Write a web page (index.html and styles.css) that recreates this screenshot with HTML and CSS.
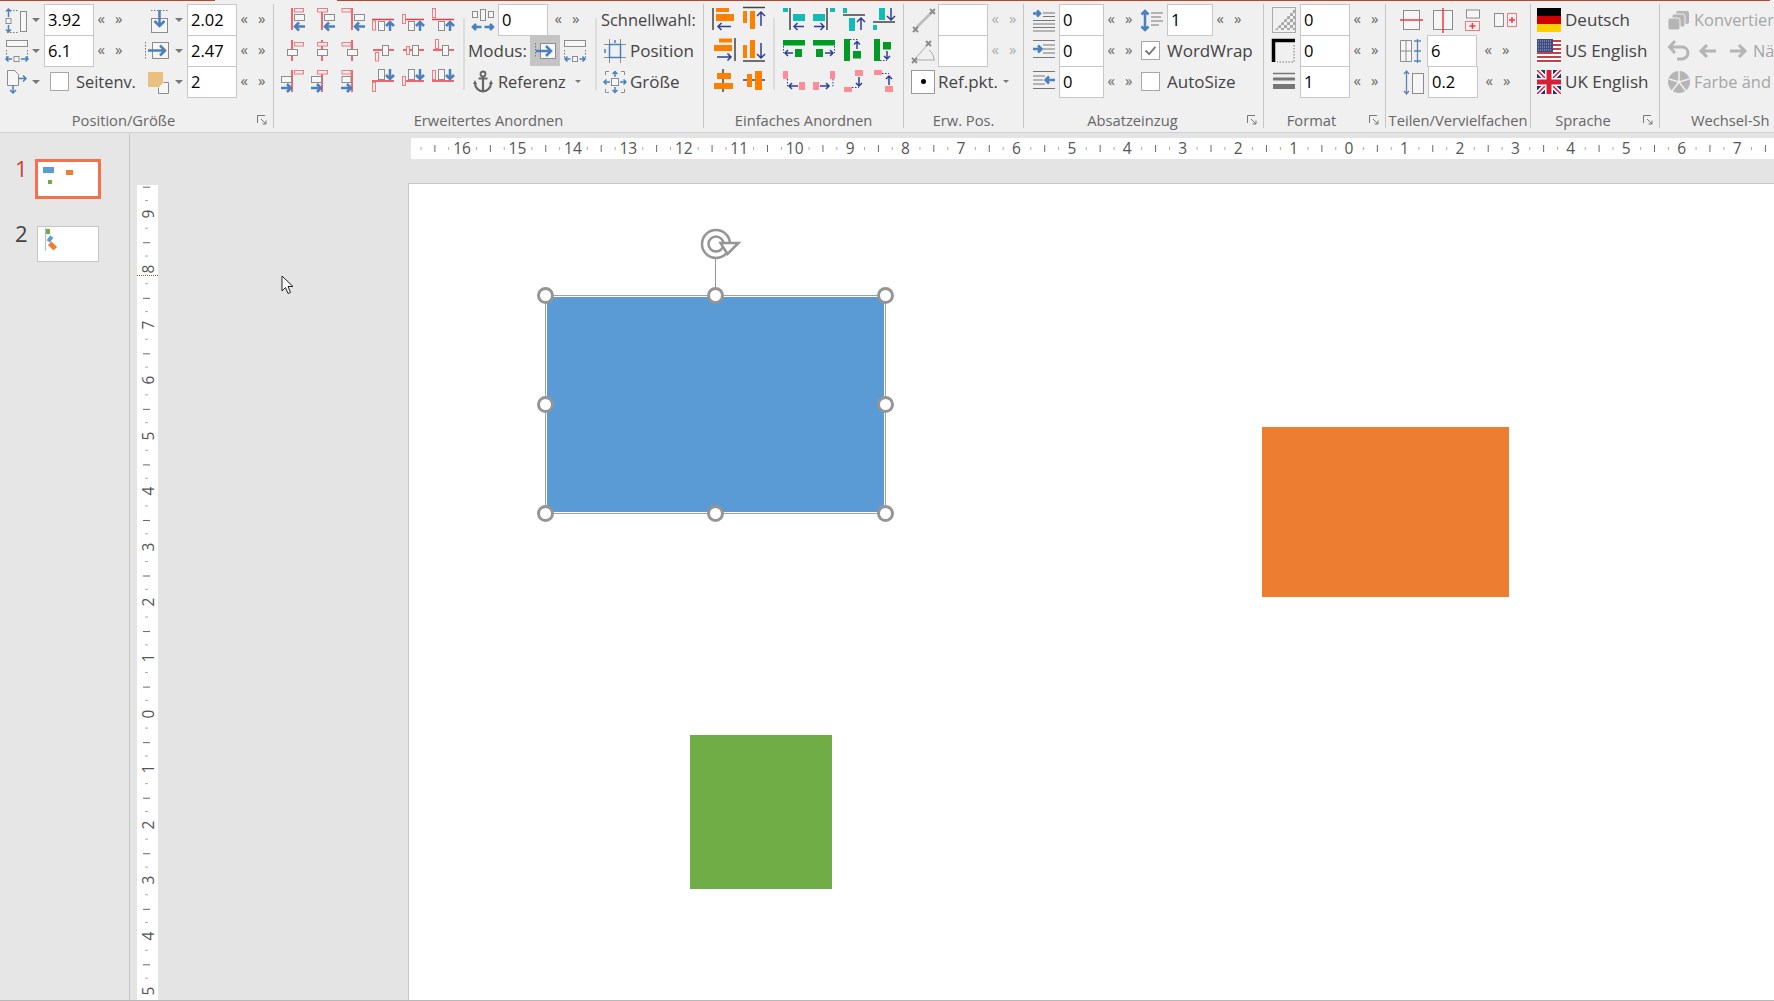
FILE: index.html
```html
<!DOCTYPE html>
<html lang="de">
<head>
    <meta charset="UTF-8">
    <title>Präsentation</title>
    <link rel="stylesheet" href="styles.css">
</head>
<body>
    <div class="ribbon">
        <!-- Position/Größe -->
        <section class="group g-pos">
            <div class="pos-grid">
                <div class="cell">
                    <svg class="ic w22" viewBox="0 0 22 26"><rect class="gray" x="15.500" y="4.500" width="6" height="20"/><path class="dots" d="M2 3.500h11M2 25.500h11"/><rect class="gray" x="1" y="11.500" width="5" height="5"/><path class="blue thin" d="M3.500 10V2m-2.500 2.500 2.500-2.500 2.500 2.500M3.500 18v7m-2.500-2.500 2.500 2.500 2.500-2.500"/></svg>
                    <i class="caret"></i>
                </div>
                <span class="field">3.92</span>
                <span class="spin"><span>«</span><span>»</span></span>
                <div class="cell">
                    <svg class="ic w20" viewBox="0 0 20 26"><path class="dots" d="M1 3.500h17"/><rect class="gray" x="1.500" y="11.500" width="16" height="14"/><path class="blue" d="M9.500 3v16m-5-5 5 5 5-5"/></svg>
                    <i class="caret"></i>
                </div>
                <span class="field">2.02</span>
                <span class="spin"><span>«</span><span>»</span></span>

                <div class="cell">
                    <svg class="ic w22" viewBox="0 0 22 26"><rect class="gray" x="1.500" y="2.500" width="21" height="6"/><path class="dots" d="M1.500 12v9M22.500 12v9"/><rect class="gray" x="9" y="18.500" width="5" height="5"/><path class="blue thin" d="M7 21H1m2.500-2.500L1 21l2.500 2.500M16 21h7m-2.500-2.500L23 21l-2.500 2.500"/></svg>
                    <i class="caret"></i>
                </div>
                <span class="field">6.1</span>
                <span class="spin"><span>«</span><span>»</span></span>
                <div class="cell back6">
                    <svg class="ic w26" viewBox="0 0 26 26"><path class="dots" d="M1.500 4v17"/><rect class="gray" x="8.500" y="4.500" width="16" height="16"/><path class="blue" d="M4 12.500h17m-5-5 5 5-5 5"/></svg>
                    <i class="caret"></i>
                </div>
                <span class="field">2.47</span>
                <span class="spin"><span>«</span><span>»</span></span>

                <div class="cell">
                    <svg class="ic w22" viewBox="0 0 22 26"><path class="gray" d="M2.500 1.500h7l4 4v11h-11z"/><path class="blue thin" d="M14 9.500h7m-3-3 3 3-3 3M8 16v8m-3-3 3 3 3-3"/></svg>
                    <i class="caret"></i>
                </div>
                <div class="cell span2 check-cell">
                    <span class="check"></span>
                    <span class="txt tight">Seitenv.</span>
                </div>
                <div class="cell back2">
                    <svg class="ic w22" viewBox="0 0 22 26"><rect fill="#e8c17f" x="0" y="3" width="15" height="15"/><path class="gray" d="M15.500 13.500h5v11h-10v-6"/></svg>
                    <i class="caret"></i>
                </div>
                <span class="field">2</span>
                <span class="spin"><span>«</span><span>»</span></span>
            </div>
            <div class="group-label">Position/Größe</div>
            <svg class="launcher" viewBox="0 0 10 10"><path d="M.5 8V.5H8M4 4l5 5M9 5.500V9H5.500"/></svg>
        </section>

        <!-- Erweitertes Anordnen -->
        <section class="group g-adv">
            <div class="adv-body">
                <div class="icon-grid six">
                    <svg class="cell-ic" viewBox="0 0 30 31"><path class="red" d="M12 4v22"/><rect class="pink" x="14.500" y="4.500" width="9" height="3.500"/><rect class="gray" x="14.500" y="10.500" width="10" height="6"/><path class="blue" d="M25 22.500H15m4-4-4 4 4 4"/></svg>
                    <svg class="cell-ic" viewBox="0 0 30 31"><path class="red" d="M12 4v22"/><rect class="pink" x="7.500" y="4.500" width="10" height="3.500"/><rect class="gray" x="14.500" y="10.500" width="10" height="6"/><path class="blue" d="M25 22.500H15m4-4-4 4 4 4"/></svg>
                    <svg class="cell-ic" viewBox="0 0 30 31"><path class="red" d="M12 4v22"/><rect class="pink" x="2" y="4.500" width="9" height="3.500"/><rect class="gray" x="14.500" y="10.500" width="10" height="6"/><path class="blue" d="M25 22.500H15m4-4-4 4 4 4"/></svg>
                    <svg class="cell-ic" viewBox="0 0 30 31"><path class="red" d="M2 15.500h22"/><rect class="pink" x="2.500" y="17" width="3" height="9"/><rect class="gray" x="8.500" y="17.500" width="6" height="9"/><path class="blue" d="M20 27V18m-4 4 4-4 4 4"/></svg>
                    <svg class="cell-ic" viewBox="0 0 30 31"><path class="red" d="M2 15.500h22"/><rect class="pink" x="2.500" y="10.500" width="3" height="9"/><rect class="gray" x="8.500" y="17.500" width="6" height="9"/><path class="blue" d="M20 27V18m-4 4 4-4 4 4"/></svg>
                    <svg class="cell-ic" viewBox="0 0 30 31"><path class="red" d="M2 15.500h22"/><rect class="pink" x="2.500" y="4.500" width="3" height="9"/><rect class="gray" x="8.500" y="17.500" width="6" height="9"/><path class="blue" d="M20 27V18m-4 4 4-4 4 4"/></svg>

                    <svg class="cell-ic" viewBox="0 0 30 31"><path class="red" d="M12 5v21"/><rect class="pink" x="14.500" y="7.500" width="9" height="3.500"/><rect class="gray" x="7.500" y="14.500" width="10" height="6"/></svg>
                    <svg class="cell-ic" viewBox="0 0 30 31"><path class="red" d="M12 5v21"/><rect class="pink" x="7.500" y="7.500" width="10" height="3.500"/><rect class="gray" x="7.500" y="14.500" width="10" height="6"/></svg>
                    <svg class="cell-ic" viewBox="0 0 30 31"><path class="red" d="M12 5v21"/><rect class="pink" x="2" y="7.500" width="9" height="3.500"/><rect class="gray" x="7.500" y="14.500" width="10" height="6"/></svg>
                    <svg class="cell-ic" viewBox="0 0 30 31"><path class="red" d="M3 15h21"/><rect class="pink" x="5.500" y="17.500" width="3" height="8.500"/><rect class="gray" x="12.500" y="10.500" width="6" height="10"/></svg>
                    <svg class="cell-ic" viewBox="0 0 30 31"><path class="red" d="M3 15h21"/><rect class="pink" x="6.500" y="11.500" width="3" height="8"/><rect class="gray" x="12.500" y="10.500" width="6" height="10"/></svg>
                    <svg class="cell-ic" viewBox="0 0 30 31"><path class="red" d="M3 15h21"/><rect class="pink" x="5.500" y="4.500" width="3" height="9"/><rect class="gray" x="12.500" y="10.500" width="6" height="10"/></svg>

                    <svg class="cell-ic" viewBox="0 0 30 31"><path class="red" d="M12 4v22"/><rect class="pink" x="14.500" y="4.500" width="9" height="3.500"/><rect class="gray" x="1.500" y="10.500" width="10" height="6"/><path class="blue" d="M1 22h10m-4-4 4 4-4 4"/></svg>
                    <svg class="cell-ic" viewBox="0 0 30 31"><path class="red" d="M12 4v22"/><rect class="pink" x="7.500" y="4.500" width="10" height="3.500"/><rect class="gray" x="1.500" y="10.500" width="10" height="6"/><path class="blue" d="M1 22h10m-4-4 4 4-4 4"/></svg>
                    <svg class="cell-ic" viewBox="0 0 30 31"><path class="red" d="M12 4v22"/><rect class="pink" x="2" y="4.500" width="9" height="3.500"/><rect class="gray" x="2" y="10.500" width="9" height="6"/><path class="blue" d="M1 22h10m-4-4 4 4-4 4"/></svg>
                    <svg class="cell-ic" viewBox="0 0 30 31"><path class="red" d="M2 15h22"/><rect class="pink" x="2.500" y="16.500" width="3" height="9"/><rect class="gray" x="8.500" y="3.500" width="6" height="10"/><path class="blue" d="M20 3v10m-4-4 4 4 4-4"/></svg>
                    <svg class="cell-ic" viewBox="0 0 30 31"><path class="red" d="M2 15h22"/><rect class="pink" x="2.500" y="10.500" width="3" height="9"/><rect class="gray" x="8.500" y="3.500" width="6" height="10"/><path class="blue" d="M20 3v10m-4-4 4 4 4-4"/></svg>
                    <svg class="cell-ic" viewBox="0 0 30 31"><path class="red" d="M2 15h22"/><rect class="pink" x="2.500" y="4.500" width="3" height="9"/><rect class="gray" x="8.500" y="3.500" width="6" height="10"/><path class="blue" d="M20 3v10m-4-4 4 4 4-4"/></svg>
                </div>
                <div class="inner-sep sep-a"></div>
                <div class="mode-col">
                    <div class="row">
                        <svg class="ic w22 ml7" viewBox="0 0 22 26"><rect class="gray" x=".500" y="4.500" width="5" height="6"/><rect class="gray" x="8.500" y="2.500" width="5" height="11"/><rect class="gray" x="16.500" y="4.500" width="5" height="6"/><path class="blue" d="M9.500 20H1m3-3-3 3 3 3M12.500 20H21m-3-3 3 3-3 3"/></svg>
                        <span class="field ml4">0</span>
                        <span class="spin ml3"><span>«</span><span>»</span></span>
                    </div>
                    <div class="row">
                        <span class="txt mode-label">Modus:</span>
                        <span class="mode-btn">
                            <svg class="ic w22" viewBox="0 0 22 26"><path class="dots" d="M1.500 5v15"/><rect class="gray" x="6.500" y="5.500" width="15" height="15"/><path class="blue" d="M2 13h15m-5-5 5 5-5 5"/></svg>
                        </span>
                        <svg class="ic w22 ml4" viewBox="0 0 22 26"><rect class="gray" x=".500" y="2.500" width="21" height="6"/><path class="dots" d="M.500 12v9M21.500 12v9"/><rect class="gray" x="8.500" y="18.500" width="5" height="5"/><path class="blue thin" d="M6.500 21H1m2.500-2.500L1 21l2.500 2.500M15.500 21H21m-2.500-2.500L21 21l-2.500 2.500"/></svg>
                    </div>
                    <div class="row">
                        <svg class="ic w20 ml8" viewBox="0 0 20 24"><path class="anchor" d="M10 7v15M5.500 8.500h9M2 13c0 5 4 8 8 8.500 4-.5 8-3.500 8-8.500"/><circle class="anchor-ring" cx="10" cy="4" r="2.500"/><path fill="#666" d="M0 14l2-4 2 4zM16 14l2-4 2 4z"/></svg>
                        <span class="txt tight ml5">Referenz</span>
                        <i class="caret sm ml9"></i>
                    </div>
                </div>
                <div class="inner-sep sep-b"></div>
                <div class="quick-col">
                    <div class="row"><span class="txt tight">Schnellwahl:</span></div>
                    <div class="row">
                        <svg class="ic w22 ml3" viewBox="0 0 22 26"><path class="gray" d="M0 6.500h22M0 19.500h22M5.500 1v24M16.500 1v24"/><rect fill="#f7f7f7" class="blue thin" x="5.500" y="6.500" width="11" height="13"/><path class="blue thin" d="M1 11v4M11 2v3"/></svg>
                        <span class="txt ml4">Position</span>
                    </div>
                    <div class="row">
                        <svg class="ic w22 ml3" viewBox="0 0 22 26"><path class="gray" d="M5 2.500H1.500V6M17 2.500h3.500V6M5 23.500H1.500V20M17 23.500h3.500V20"/><rect class="gray" x="7.500" y="9.500" width="7" height="7"/><path class="blue thin" d="M11 8V2.500m-2.500 2.500L11 2.500 13.500 5M11 18v5.500m-2.500-2.500 2.500 2.500 2.500-2.500M6 13H0m2.500-2.500L0 13l2.500 2.500M16 13h6m-2.500-2.500L22 13l-2.500 2.500"/></svg>
                        <span class="txt ml4">Größe</span>
                    </div>
                </div>
            </div>
            <div class="group-label">Erweitertes Anordnen</div>
        </section>

        <!-- Einfaches Anordnen -->
        <section class="group g-simple">
            <div class="simple-body">
                <div class="icon-grid two">
                    <svg class="cell-ic" viewBox="0 0 30 31"><path class="dark" d="M3 4v22"/><rect class="org" x="6" y="4" width="13" height="4"/><rect class="org" x="6" y="10" width="18" height="7"/><path class="navy" d="M21 22.500H8m3.500-3.500L8 22.500l3.500 3.500"/></svg>
                    <svg class="cell-ic" viewBox="0 0 30 31"><path class="dark" d="M3 3.500h22"/><rect class="org" x="3" y="7" width="4" height="12"/><rect class="org" x="10" y="7" width="5" height="18"/><path class="navy" d="M21 22V8m-4 4 4-4 4 4"/></svg>
                    <svg class="cell-ic" viewBox="0 0 30 31"><path class="dark" d="M25 3v23"/><rect class="org" x="9" y="3.500" width="13" height="4"/><rect class="org" x="4" y="10" width="18" height="6"/><path class="navy" d="M7 22h14m-3.500-3.500L21 22l-3.500 3.500"/></svg>
                    <svg class="cell-ic" viewBox="0 0 30 31"><path class="dark" d="M3 26h22"/><rect class="org" x="3" y="10" width="4" height="13"/><rect class="org" x="10" y="5" width="5" height="18"/><path class="navy" d="M21 8v15m-4-4 4 4 4-4"/></svg>
                    <svg class="cell-ic" viewBox="0 0 30 31"><path class="dark" d="M13 3v23"/><rect class="org" x="7" y="7" width="14" height="6"/><rect class="org" x="4" y="17" width="19" height="6"/></svg>
                    <svg class="cell-ic" viewBox="0 0 30 31"><path class="dark" d="M3 14h22"/><rect class="org" x="7" y="8" width="5" height="13"/><rect class="org" x="15" y="5" width="7" height="19"/></svg>
                </div>
                <div class="inner-sep sep-c"></div>
                <div class="icon-grid four">
                    <svg class="cell-ic" viewBox="0 0 30 31"><rect class="teal" x="3" y="4" width="5" height="4"/><path class="dark" d="M10 4v22"/><rect class="teal" x="13" y="10" width="12" height="7"/><path class="navy" d="M24 22.500H14m3.500-3.500-3.500 3.500 3.500 3.500"/></svg>
                    <svg class="cell-ic" viewBox="0 0 30 31"><rect class="teal" x="20" y="4" width="5" height="4"/><path class="dark" d="M17 4v22"/><rect class="teal" x="3" y="10" width="12" height="7"/><path class="navy" d="M4 22.500h10m-3.500-3.500 3.500 3.500-3.500 3.500"/></svg>
                    <svg class="cell-ic" viewBox="0 0 30 31"><rect class="teal" x="3" y="4" width="4" height="5"/><path class="dark" d="M3 11h22"/><rect class="teal" x="9" y="14" width="6" height="13"/><path class="navy" d="M21 26V14m-4 4 4-4 4 4"/></svg>
                    <svg class="cell-ic" viewBox="0 0 30 31"><rect class="teal" x="9" y="4" width="6" height="12"/><path class="navy" d="M21 4v12m-4-4 4 4 4-4"/><path class="dark" d="M3 18h22"/><rect class="teal" x="3" y="21" width="4" height="5"/></svg>

                    <svg class="cell-ic" viewBox="0 0 30 31"><rect class="grn" x="3" y="5" width="22" height="5.500"/><rect class="grn" x="15" y="14" width="7" height="8"/><path class="navy-dots" d="M3.500 11v7"/><path class="navy" d="M13 18H5m3-3-3 3 3 3"/></svg>
                    <svg class="cell-ic" viewBox="0 0 30 31"><rect class="grn" x="3" y="5" width="22" height="5.500"/><rect class="grn" x="6" y="14" width="7" height="8"/><path class="navy-dots" d="M24.500 11v7"/><path class="navy" d="M15 18h8m-3-3 3 3-3 3"/></svg>
                    <svg class="cell-ic" viewBox="0 0 30 31"><rect class="grn" x="4" y="4" width="6" height="22"/><rect class="grn" x="13" y="16" width="8" height="7.500"/><path class="navy-dots" d="M10 4.500h8"/><path class="navy" d="M17 14V6.500m-3 3 3-3 3 3"/></svg>
                    <svg class="cell-ic" viewBox="0 0 30 31"><rect class="grn" x="4" y="4" width="6" height="22"/><rect class="grn" x="13" y="7" width="8" height="7.500"/><path class="navy-dots" d="M10 25.500h7"/><path class="navy" d="M17 16v8m-3-3 3 3 3-3"/></svg>

                    <svg class="cell-ic" viewBox="0 0 30 31"><rect class="rose" x="3" y="5" width="5" height="8"/><rect class="rose" x="19" y="16" width="6" height="8"/><path class="navy-dots" d="M7.500 13v7h2"/><path class="navy" d="M18 20H9m3-3-3 3 3 3"/></svg>
                    <svg class="cell-ic" viewBox="0 0 30 31"><rect class="rose" x="3" y="16" width="6" height="8"/><rect class="rose" x="20" y="5" width="5" height="8"/><path class="navy-dots" d="M23 13v7h-2"/><path class="navy" d="M10 20h9m-3-3 3 3-3 3"/></svg>
                    <svg class="cell-ic" viewBox="0 0 30 31"><rect class="rose" x="4" y="21" width="8" height="5"/><rect class="rose" x="15" y="4" width="8" height="6"/><path class="navy-dots" d="M12 21.500h7"/><path class="navy" d="M19 11v9m-3-3 3 3 3-3"/></svg>
                    <svg class="cell-ic" viewBox="0 0 30 31"><rect class="rose" x="4" y="4" width="8" height="5"/><rect class="rose" x="15" y="20" width="8" height="6"/><path class="navy-dots" d="M12 7.500h7"/><path class="navy" d="M19 19v-9m-3 3 3-3 3 3"/></svg>
                </div>
            </div>
            <div class="group-label">Einfaches Anordnen</div>
        </section>

        <!-- Erw. Pos. -->
        <section class="group g-ext">
            <div class="rows">
                <div class="row">
                    <svg class="ic w26 ml7" viewBox="0 0 26 26"><path class="light-line" d="M5 21 21 5"/><path class="cross" d="M2 25l5-5M2 20l5 5M19 7l5-5M19 2l5 5"/></svg>
                    <span class="field ml1">&nbsp;</span>
                    <span class="spin off"><span>«</span><span>»</span></span>
                </div>
                <div class="row">
                    <svg class="ic w26 ml7" viewBox="0 0 26 26"><path class="thin-gray" d="M3 22h21M3 22 18 5M18 12c3 2 5 6 5 10"/><path class="cross" d="M1 25l5-5M1 20l5 5M15 8l5-5M15 3l5 5"/></svg>
                    <span class="field ml1">&nbsp;</span>
                    <span class="spin off"><span>«</span><span>»</span></span>
                </div>
                <div class="row">
                    <span class="ref-box ml7"><i></i></span>
                    <span class="txt ml3">Ref.pkt.</span>
                    <i class="caret sm ml5"></i>
                </div>
            </div>
            <div class="group-label">Erw. Pos.</div>
        </section>

        <!-- Absatzeinzug -->
        <section class="group g-indent">
            <div class="indent-grid">
                <svg class="ic w22" viewBox="0 0 22 26"><path class="dark-thin" d="M10 6h12M10 9.500h12M0 13.500h22M0 17h22M0 20.500h22M0 24h22"/><path class="blue" d="M0 6.500h7m-3-3 3 3-3 3"/></svg>
                <span class="field">0</span>
                <span class="spin"><span>«</span><span>»</span></span>
                <svg class="ic w22" viewBox="0 0 22 26"><path class="dark-thin" d="M10 6h12M10 10h10M10 14h12M10 18h8"/><path class="blue" d="M4 4v19M.500 7.500 4 4l3.500 3.500M.500 19.500 4 23l3.500-3.500"/></svg>
                <span class="field">1</span>
                <span class="spin"><span>«</span><span>»</span></span>

                <svg class="ic w22" viewBox="0 0 22 26"><path class="dark-thin" d="M0 2.500h22M10 7h12M10 11h12M10 15h12M0 19.500h22"/><path class="blue" d="M0 11h8m-3-3.500L8.500 11 5 14.500"/></svg>
                <span class="field">0</span>
                <span class="spin"><span>«</span><span>»</span></span>
                <div class="cell span3 check-cell">
                    <span class="check"><svg viewBox="0 0 19 19"><path d="M4 9.500l4 4 7-8"/></svg></span>
                    <span class="txt ml7">WordWrap</span>
                </div>

                <svg class="ic w22" viewBox="0 0 22 26"><path class="dark-thin" d="M0 2.500h22M0 7h12M0 11h10M0 15h12M0 19.500h22"/><path class="blue" d="M22 11h-9m3-3.500L12.500 11l3.500 3.500"/></svg>
                <span class="field">0</span>
                <span class="spin"><span>«</span><span>»</span></span>
                <div class="cell span3 check-cell">
                    <span class="check"></span>
                    <span class="txt ml7">AutoSize</span>
                </div>
            </div>
            <div class="group-label">Absatzeinzug</div>
            <svg class="launcher" viewBox="0 0 10 10"><path d="M.5 8V.5H8M4 4l5 5M9 5.500V9H5.500"/></svg>
        </section>

        <!-- Format -->
        <section class="group g-format">
            <div class="rows">
                <div class="row">
                    <svg class="ic w24 ml8" viewBox="0 0 24 26"><defs><pattern id="chk" width="6" height="6" patternUnits="userSpaceOnUse"><rect width="3" height="3" fill="#a8a8a8"/><rect x="3" y="3" width="3" height="3" fill="#a8a8a8"/></pattern></defs><rect class="thin-gray" x=".500" y=".500" width="23" height="25"/><path fill="url(#chk)" d="M3 23 23 1v22z"/></svg>
                    <span class="field ml4">0</span>
                    <span class="spin"><span>«</span><span>»</span></span>
                </div>
                <div class="row">
                    <svg class="ic w24 ml8" viewBox="0 0 24 26"><path d="M1.500 24V2.500H23" fill="none" stroke="#000" stroke-width="3.500"/><path class="dots" d="M22 7v17H5"/></svg>
                    <span class="field ml4">0</span>
                    <span class="spin"><span>«</span><span>»</span></span>
                </div>
                <div class="row">
                    <svg class="ic w24 ml8" viewBox="0 0 24 26"><path d="M1 4.500h22" stroke="#777" stroke-width="1.500"/><path d="M1 10h22" stroke="#777" stroke-width="3"/><path d="M1 17.500h22" stroke="#777" stroke-width="5"/></svg>
                    <span class="field ml4">1</span>
                    <span class="spin"><span>«</span><span>»</span></span>
                </div>
            </div>
            <div class="group-label">Format</div>
            <svg class="launcher" viewBox="0 0 10 10"><path d="M.5 8V.5H8M4 4l5 5M9 5.500V9H5.500"/></svg>
        </section>

        <!-- Teilen/Vervielfachen -->
        <section class="group g-split">
            <div class="rows">
                <div class="row split-icons">
                    <svg class="ic w24" viewBox="0 0 24 26"><rect class="gray" x="3.500" y="3.500" width="16" height="19"/><path class="red" d="M0 13h23"/></svg>
                    <svg class="ic w20" viewBox="0 0 20 26"><rect class="gray" x=".500" y="3.500" width="19" height="19"/><path class="red" d="M10 1v25"/></svg>
                    <svg class="ic w16 ml3" viewBox="0 0 16 26"><rect class="gray" x="1.500" y="3" width="13" height="8"/><rect class="pink" x=".500" y="14.500" width="14" height="9"/><path class="red" d="M7.500 16v6M4.500 19h6"/></svg>
                    <svg class="ic w24 ml4" viewBox="0 0 24 26"><rect class="gray" x=".500" y="6.500" width="9" height="13"/><rect class="pink" x="13.500" y="6.500" width="9" height="13"/><path class="red" d="M18 10v6M15 13h6"/></svg>
                </div>
                <div class="row">
                    <svg class="ic w24 ml14" viewBox="0 0 24 26"><path class="gray" d="M.500 2.500h11v21H.500zM.500 13h11M6 2.500v21"/><path class="blue-thin" d="M14 3h7M14 13h7M14 23h7M17.500 1v24"/></svg>
                    <span class="field ml3">6</span>
                    <span class="spin ml4"><span>«</span><span>»</span></span>
                </div>
                <div class="row">
                    <svg class="ic w24 ml18" viewBox="0 0 24 26"><rect class="gray" x="8.500" y="4.500" width="11" height="20"/><path class="blue-thin" d="M2.500 2v23M0 5l2.500-3L5 5M0 22l2.500 3L5 22"/></svg>
                    <span class="field">0.2</span>
                    <span class="spin ml4"><span>«</span><span>»</span></span>
                </div>
            </div>
            <div class="group-label">Teilen/Vervielfachen</div>
        </section>

        <!-- Sprache -->
        <section class="group g-lang">
            <div class="rows">
                <div class="row">
                    <svg class="flag" viewBox="0 0 24 24"><rect width="24" height="8" fill="#000"/><rect y="8" width="24" height="8" fill="#d00000"/><rect y="16" width="24" height="8" fill="#ffce00"/></svg>
                    <span class="txt ml4">Deutsch</span>
                </div>
                <div class="row">
                    <svg class="flag" viewBox="0 0 24 24"><rect width="24" height="24" fill="#fff"/><path d="M0 2h24M0 6h24M0 10h24M0 14h24M0 18h24M0 22h24" stroke="#c0404c" stroke-width="2"/><rect width="16" height="13" fill="#3e4b82"/><path d="M1 2h14M1 5h14M1 8h14M1 11h14" stroke="#a9b0cc" stroke-dasharray="1 1"/></svg>
                    <span class="txt ml4">US English</span>
                </div>
                <div class="row">
                    <svg class="flag" viewBox="0 0 24 24"><rect width="24" height="24" fill="#1f2f78"/><path d="M0 0l24 24M24 0 0 24" stroke="#fff" stroke-width="5"/><path d="M0 0l24 24M24 0 0 24" stroke="#d3213a" stroke-width="1.500"/><path d="M12 0v24M0 12h24" stroke="#fff" stroke-width="8"/><path d="M12 0v24M0 12h24" stroke="#d3213a" stroke-width="5"/></svg>
                    <span class="txt ml4">UK English</span>
                </div>
            </div>
            <div class="group-label">Sprache</div>
            <svg class="launcher" viewBox="0 0 10 10"><path d="M.5 8V.5H8M4 4l5 5M9 5.500V9H5.500"/></svg>
        </section>

        <!-- Wechsel-Shapes, am rechten Rand abgeschnitten -->
        <section class="group g-swap">
            <div class="rows">
                <div class="row">
                    <svg class="ic w22 ml8" viewBox="0 0 22 26"><rect fill="#b5b5b5" x="8" y="4" width="13" height="13" rx="2"/><rect fill="#b5b5b5" stroke="#f0f0f0" x="4" y="7" width="13" height="13" rx="2"/><rect fill="#b5b5b5" stroke="#f0f0f0" x="0" y="11" width="12" height="12" rx="2"/></svg>
                    <span class="txt tight off ml4">Konvertier</span>
                </div>
                <div class="row">
                    <svg class="ic w22 ml8" viewBox="0 0 22 26"><path class="gray-arrow" d="M2 9h12c4 0 6 3 6 6s-3 6-6 6H9M7 3 1.500 9 7 15"/></svg>
                    <svg class="ic w20 ml9" viewBox="0 0 20 26"><path class="gray-arrow" d="M17 13H2m6-6-6 6 6 6"/></svg>
                    <svg class="ic w20 ml9" viewBox="0 0 20 26"><path class="gray-arrow" d="M2 13h15m-6-6 6 6-6 6"/></svg>
                    <span class="txt tight off ml5">Nä</span>
                </div>
                <div class="row">
                    <svg class="ic w22 ml8" viewBox="0 0 22 26"><circle cx="11" cy="13" r="11" fill="#b5b5b5"/><path stroke="#f0f0f0" stroke-width="1.500" d="M11 13V2M11 13l10-3M11 13l7 9M11 13l-7 9M11 13 1 10"/></svg>
                    <span class="txt tight off ml4">Farbe änd</span>
                </div>
            </div>
            <div class="group-label">Wechsel-Sh</div>
        </section>
    </div>

    <div class="main">
        <!-- Folienliste -->
        <aside class="thumbs">
            <div class="thumb-row">
                <span class="num active-num">1</span>
                <div class="thumb active">
                    <i class="mini m1"></i><i class="mini m2"></i><i class="mini m3"></i>
                </div>
            </div>
            <div class="thumb-row">
                <span class="num num-2">2</span>
                <div class="thumb">
                    <i class="mini m4"></i><i class="mini m5"></i><i class="mini m6"></i><i class="mini m7"></i>
                </div>
            </div>
        </aside>

        <div class="workspace">
            <div class="ruler-h">
                <span>16</span><span>15</span><span>14</span><span>13</span><span>12</span><span>11</span><span>10</span><span>9</span><span>8</span><span>7</span><span>6</span><span>5</span><span>4</span><span>3</span><span>2</span><span>1</span><span>0</span><span>1</span><span>2</span><span>3</span><span>4</span><span>5</span><span>6</span><span>7</span>
            </div>
            <div class="ruler-v">
                <span>9</span><span>8</span><span>7</span><span>6</span><span>5</span><span>4</span><span>3</span><span>2</span><span>1</span><span>0</span><span>1</span><span>2</span><span>3</span><span>4</span><span>5</span>
                <i class="cursor-mark"></i>
            </div>
            <div class="slide">
                <div class="shape s-blue">
                    <i class="handle h-tl"></i><i class="handle h-tc"></i><i class="handle h-tr"></i>
                    <i class="handle h-ml"></i><i class="handle h-mr"></i>
                    <i class="handle h-bl"></i><i class="handle h-bc"></i><i class="handle h-br"></i>
                    <i class="rot-line"></i>
                    <svg class="rot-icon" viewBox="0 0 40 34"><circle cx="16" cy="16" r="14" fill="#fff" stroke="#959595" stroke-width="2.500"/><circle cx="16" cy="16" r="7.500" fill="#fff" stroke="#959595" stroke-width="2.500"/><path d="M20.500 15h18l-11 11z" fill="#fff" stroke="#959595" stroke-width="2.500"/></svg>
                </div>
                <div class="shape s-orange"></div>
                <div class="shape s-green"></div>
            </div>
            <svg class="pointer" viewBox="0 0 13 20"><path d="M1 1v15l3.500-3.500 2.500 6 2.500-1-2.500-6H12z" fill="#fff" stroke="#222" stroke-width="1"/></svg>
        </div>
    </div>
    <div class="foot-line"></div>
</body>
</html>
```

FILE: styles.css
```css
* {
    box-sizing: border-box;
}
html, body {
    margin: 0;
    padding: 0;
}
body {
    width: 1774px;
    height: 1001px;
    overflow: hidden;
    font-family: "Open Sans", "Noto Sans", sans-serif;
    background-color: #e4e4e4;
    color: #444;
}

/* ribbon */
.ribbon {
    display: flex;
    height: 133px;
    padding-top: 4px;
    background-color: #f0f0f0;
    border-bottom: 1px solid #d0d0d0;
    position: relative;
    overflow: hidden;
}
.ribbon::before {
    content: "";
    position: absolute;
    left: 0;
    top: 0;
    width: 215px;
    height: 1px;
    background-color: #b7472a;
}
.ribbon::after {
    content: "";
    position: absolute;
    left: 337px;
    top: 0;
    width: 1433px;
    height: 1px;
    background-color: #b7472a;
}
.group {
    position: relative;
    height: 124px;
    flex: none;
    display: flex;
    flex-direction: column;
    border-right: 1px solid #c6c6c6;
}
.g-pos { width: 274px; }
.g-adv { width: 430px; }
.g-simple { width: 200px; }
.g-ext { width: 120px; }
.g-indent { width: 240px; }
.g-format { width: 122px; }
.g-split { width: 145px; }
.g-lang { width: 129px; }
.g-swap { width: 114px; border-right: none; }

.group-label {
    margin-top: auto;
    margin-bottom: -2px;
    height: 20px;
    line-height: 20px;
    font-size: 14.700px;
    color: #666;
    text-align: center;
    white-space: nowrap;
}
.g-pos .group-label { padding-right: 26px; }
.g-indent .group-label { padding-right: 22px; }
.g-format .group-label { padding-right: 26px; }
.g-lang .group-label { padding-right: 24px; }
.g-swap .group-label { text-align: left; padding-left: 31px; }

.launcher {
    position: absolute;
    right: 6px;
    bottom: 3px;
    width: 10px;
    height: 10px;
    fill: none;
    stroke: #777;
    stroke-width: 1;
}

.rows, .pos-grid, .indent-grid {
    height: 93px;
}
.row {
    display: flex;
    align-items: center;
    height: 31px;
    flex: none;
}
.cell {
    display: flex;
    align-items: center;
    height: 31px;
}
.pos-grid {
    display: grid;
    grid-template-columns: 39px 50px 56px 37px 50px 36px;
    grid-auto-rows: 31px;
    padding-left: 5px;
}
.indent-grid {
    display: grid;
    grid-template-columns: 26px 45px 37px 26px 46px 40px;
    grid-auto-rows: 31px;
    padding-left: 9px;
    align-items: center;
}
.span2 { grid-column: span 2; }
.span3 { grid-column: span 3; }
.back6 { margin-left: -6px; }
.back2 { margin-left: -2px; }
.check-cell { padding-left: 6px; }
.g-indent .check-cell { padding-left: 0; }

.field {
    display: block;
    flex: none;
    width: 50px;
    height: 32px;
    line-height: 30px;
    padding-left: 3px;
    background-color: #fff;
    border: 1px solid #c6c6c6;
    font-size: 16.500px;
    color: #000;
    align-self: flex-start;
}
.pos-grid .field, .indent-grid .field {
    align-self: start;
}
.indent-grid .field {
    width: auto;
}
.spin {
    display: flex;
    gap: 10px;
    padding-left: 3.500px;
    font-size: 15px;
    color: #666;
    height: 31px;
    line-height: 29px;
    flex: none;
    width: 36px;
}
.spin.off { color: #adadad; }

.txt {
    font-size: 17px;
    color: #444;
    white-space: nowrap;
}
.txt.tight { font-size: 16.400px; }
.txt.off { color: #a6a6a6; }

.check {
    display: block;
    flex: none;
    width: 19px;
    height: 19px;
    background-color: #fff;
    border: 1px solid #a8a8a8;
    margin-right: 7px;
}
.check svg {
    display: block;
    width: 17px;
    height: 17px;
    fill: none;
    stroke: #777;
    stroke-width: 2;
}
.g-indent .check { margin-right: 0; }

.caret {
    display: block;
    flex: none;
    width: 0;
    height: 0;
    margin-left: 5px;
    border-left: 4px solid transparent;
    border-right: 4px solid transparent;
    border-top: 4px solid #777;
}
.caret.sm {
    border-left-width: 3.500px;
    border-right-width: 3.500px;
    border-top-width: 3.500px;
}

/* spacing helpers */
.ml1 { margin-left: 1px; }
.ml3 { margin-left: 3px; }
.ml4 { margin-left: 4px; }
.ml5 { margin-left: 5px; }
.ml7 { margin-left: 7px; }
.ml8 { margin-left: 8px; }
.ml9 { margin-left: 9px; }
.ml14 { margin-left: 14px; }
.ml18 { margin-left: 18px; }
.caret.ml5 { margin-left: 5px; }
.caret.ml9 { margin-left: 9px; }

/* icons */
.ic {
    display: block;
    flex: none;
    height: 26px;
    overflow: visible;
}
.w16 { width: 16px; }
.w20 { width: 20px; }
.w22 { width: 22px; }
.w24 { width: 24px; }
.w26 { width: 26px; }
.flag {
    display: block;
    flex: none;
    width: 24px;
    height: 24px;
    margin-left: 6px;
}
.cell-ic {
    display: block;
    width: 30px;
    height: 31px;
    overflow: visible;
}
.gray { fill: #f6f6f6; stroke: #8c8c8c; stroke-width: 1; }
.pink { fill: #f8f0f0; stroke: #ee7a82; stroke-width: 1; }
.red { fill: none; stroke: #ee3a44; stroke-width: 1.500; }
.blue { fill: none; stroke: #4a80bb; stroke-width: 2.500; }
.blue.thin { stroke-width: 1.500; }
.blue-thin { fill: none; stroke: #5b84b4; stroke-width: 1.300; }
.dots { fill: none; stroke: #777; stroke-width: 1; stroke-dasharray: 1.500 1.500; }
.dark { fill: none; stroke: #444; stroke-width: 1.500; }
.dark-thin { fill: none; stroke: #777; stroke-width: 1; }
.navy { fill: none; stroke: #2f3f96; stroke-width: 1.500; }
.navy-dots { fill: none; stroke: #2f3f96; stroke-width: 1; stroke-dasharray: 1.500 1.500; }
.org { fill: #ff8000; }
.teal { fill: #12bcb4; }
.grn { fill: #009a24; }
.rose { fill: #ff8c96; }
.anchor { fill: none; stroke: #666; stroke-width: 2.200; }
.anchor-ring { fill: none; stroke: #666; stroke-width: 1.800; }
.light-line { fill: none; stroke: #bbb; stroke-width: 2.500; }
.thin-gray { fill: none; stroke: #aaa; stroke-width: 1; }
.cross { fill: none; stroke: #8a8a8a; stroke-width: 1.800; }
.gray-arrow { fill: none; stroke: #b5b5b5; stroke-width: 3; }

.adv-body, .simple-body {
    display: flex;
    height: 93px;
}
.icon-grid {
    display: grid;
    grid-auto-rows: 31px;
    flex: none;
}
.six { grid-template-columns: repeat(6, 30px); margin-left: 6px; }
.two { grid-template-columns: repeat(2, 30px); margin-left: 6px; }
.four { grid-template-columns: repeat(4, 30px); }
.inner-sep {
    flex: none;
    width: 2px;
    height: 72px;
    margin-top: 14px;
    background-color: #dcdcdc;
}
.sep-a { margin-left: 3px; }
.sep-c { margin-left: 3px; margin-right: 5px; }
.mode-col {
    width: 130px;
    flex: none;
}
.mode-label {
    flex: none;
    width: 65px;
    padding-left: 3px;
}
.quick-col {
    padding-left: 4px;
    flex: none;
}
.mode-btn {
    display: flex;
    align-items: center;
    justify-content: center;
    flex: none;
    width: 30px;
    height: 31px;
    background-color: #c4c4c4;
}
.ref-box {
    display: flex;
    align-items: center;
    justify-content: center;
    flex: none;
    width: 24px;
    height: 24px;
    background-color: #fff;
    border: 1px solid #999;
}
.ref-box i {
    display: block;
    width: 5px;
    height: 5px;
    border-radius: 50%;
    background-color: #000;
}
.split-icons {
    gap: 9px;
    padding-left: 14px;
}

/* slide area */
.main {
    display: flex;
    height: 867px;
}
.thumbs {
    flex: none;
    width: 130px;
    padding-top: 26px;
    background-color: #e6e6e6;
    border-right: 1px solid #c6c6c6;
}
.thumb-row {
    display: flex;
    position: relative;
    height: 67px;
}
.num {
    width: 35px;
    height: 26px;
    margin-top: -4px;
    padding-left: 15px;
    font-size: 22px;
    line-height: 26px;
    color: #444;
}
.num-2 { margin-top: -6px; }
.active-num { color: #c8472a; }
.thumb {
    position: relative;
    width: 62px;
    height: 36px;
    margin-left: 2px;
    background-color: #fff;
    border: 1px solid #c6c6c6;
}
.thumb.active {
    width: 66px;
    height: 40px;
    margin-left: 0;
    border: 3px solid #f4704e;
}
.mini {
    position: absolute;
    display: block;
}
.m1 { left: 5px; top: 5px; width: 11px; height: 6px; background-color: #5b9bd5; }
.m2 { left: 28px; top: 8px; width: 7px; height: 5px; background-color: #ed7d31; }
.m3 { left: 10px; top: 18px; width: 4px; height: 4px; background-color: #70ad47; }
.m4 { left: 7px; top: 1px; width: 1px; height: 23px; background-color: #9cc3e6; }
.m5 { left: 8px; top: 2px; width: 4px; height: 5px; background-color: #70ad47; }
.m6 { left: 10px; top: 9px; width: 4px; height: 6px; background-color: #5b9bd5; transform: rotate(35deg); }
.m7 { left: 12px; top: 15px; width: 5px; height: 8px; background-color: #ed7d31; transform: rotate(-45deg); }

.workspace {
    flex: 1;
    position: relative;
    display: grid;
    grid-template-columns: 7px 21px 250px 1fr;
    grid-template-rows: 5px 21px 24px 1fr;
    min-width: 0;
}
.ruler-h {
    grid-column: 4;
    grid-row: 2;
    margin-left: 3px;
    padding-left: 23.300px;
    display: flex;
    overflow: hidden;
    background-color: #fff;
    background-image:
        linear-gradient(90deg, #666 1px, transparent 1px),
        linear-gradient(90deg, #aaa 1px, transparent 1px),
        linear-gradient(90deg, #aaa 1px, transparent 1px);
    background-size: 55.450px 7px, 55.450px 3px, 55.450px 3px;
    background-position: 23.400px 7px, 9.500px 9px, 37.300px 9px;
    background-repeat: repeat-x;
}
.ruler-h span {
    flex: none;
    width: 55.450px;
    text-align: center;
    font-size: 15.500px;
    line-height: 21px;
    color: #555;
}
.ruler-v {
    grid-column: 2;
    grid-row: 4;
    margin-top: 2px;
    padding-top: .600px;
    position: relative;
    overflow: hidden;
    background-color: #fff;
    background-image:
        linear-gradient(#666 1px, transparent 1px),
        linear-gradient(#aaa 1px, transparent 1px),
        linear-gradient(#aaa 1px, transparent 1px);
    background-size: 7px 55.550px, 3px 55.550px, 3px 55.550px;
    background-position: 6px 1.700px, 8px 15px, 8px 42.700px;
    background-repeat: repeat-y;
}
.ruler-v span {
    display: flex;
    align-items: center;
    justify-content: center;
    height: 55.550px;
    font-size: 15.500px;
    color: #555;
    writing-mode: vertical-rl;
    transform: rotate(180deg);
}
.cursor-mark {
    position: absolute;
    left: 0;
    right: 0;
    top: 90px;
    height: 0;
    border-top: 1px dotted #c8472a;
}
.slide {
    grid-column: 4;
    grid-row: 4;
    position: relative;
    overflow: hidden;
    background-color: #fff;
    border-left: 1px solid #c6c6c6;
    border-top: 1px solid #c6c6c6;
}
.shape {
    position: absolute;
}
.s-blue {
    left: 137px;
    top: 112px;
    width: 339px;
    height: 217px;
    background-color: #5b9bd5;
    border: 1px solid #fff;
    outline: 1px solid #a0a0a0;
}
.s-orange {
    left: 853px;
    top: 243px;
    width: 247px;
    height: 170px;
    background-color: #ed7d31;
}
.s-green {
    left: 281px;
    top: 551px;
    width: 142px;
    height: 154px;
    background-color: #70ad47;
}
.handle {
    position: absolute;
    display: block;
    width: 17px;
    height: 17px;
    border-radius: 50%;
    background-color: #fff;
    border: 3px solid #959595;
}
.h-tl { left: -10px; top: -10px; }
.h-tc { left: 160px; top: -10px; }
.h-tr { left: 330px; top: -10px; }
.h-ml { left: -10px; top: 99px; }
.h-mr { left: 330px; top: 99px; }
.h-bl { left: -10px; top: 208px; }
.h-bc { left: 160px; top: 208px; }
.h-br { left: 330px; top: 208px; }
.rot-line {
    position: absolute;
    left: 168px;
    top: -38px;
    width: 1px;
    height: 29px;
    background-color: #959595;
}
.rot-icon {
    position: absolute;
    left: 153px;
    top: -69px;
    width: 40px;
    height: 34px;
    overflow: visible;
}
.pointer {
    position: absolute;
    left: 151px;
    top: 142px;
    width: 13px;
    height: 20px;
}
.foot-line {
    height: 1px;
    background-color: #b8b8b8;
}
```
